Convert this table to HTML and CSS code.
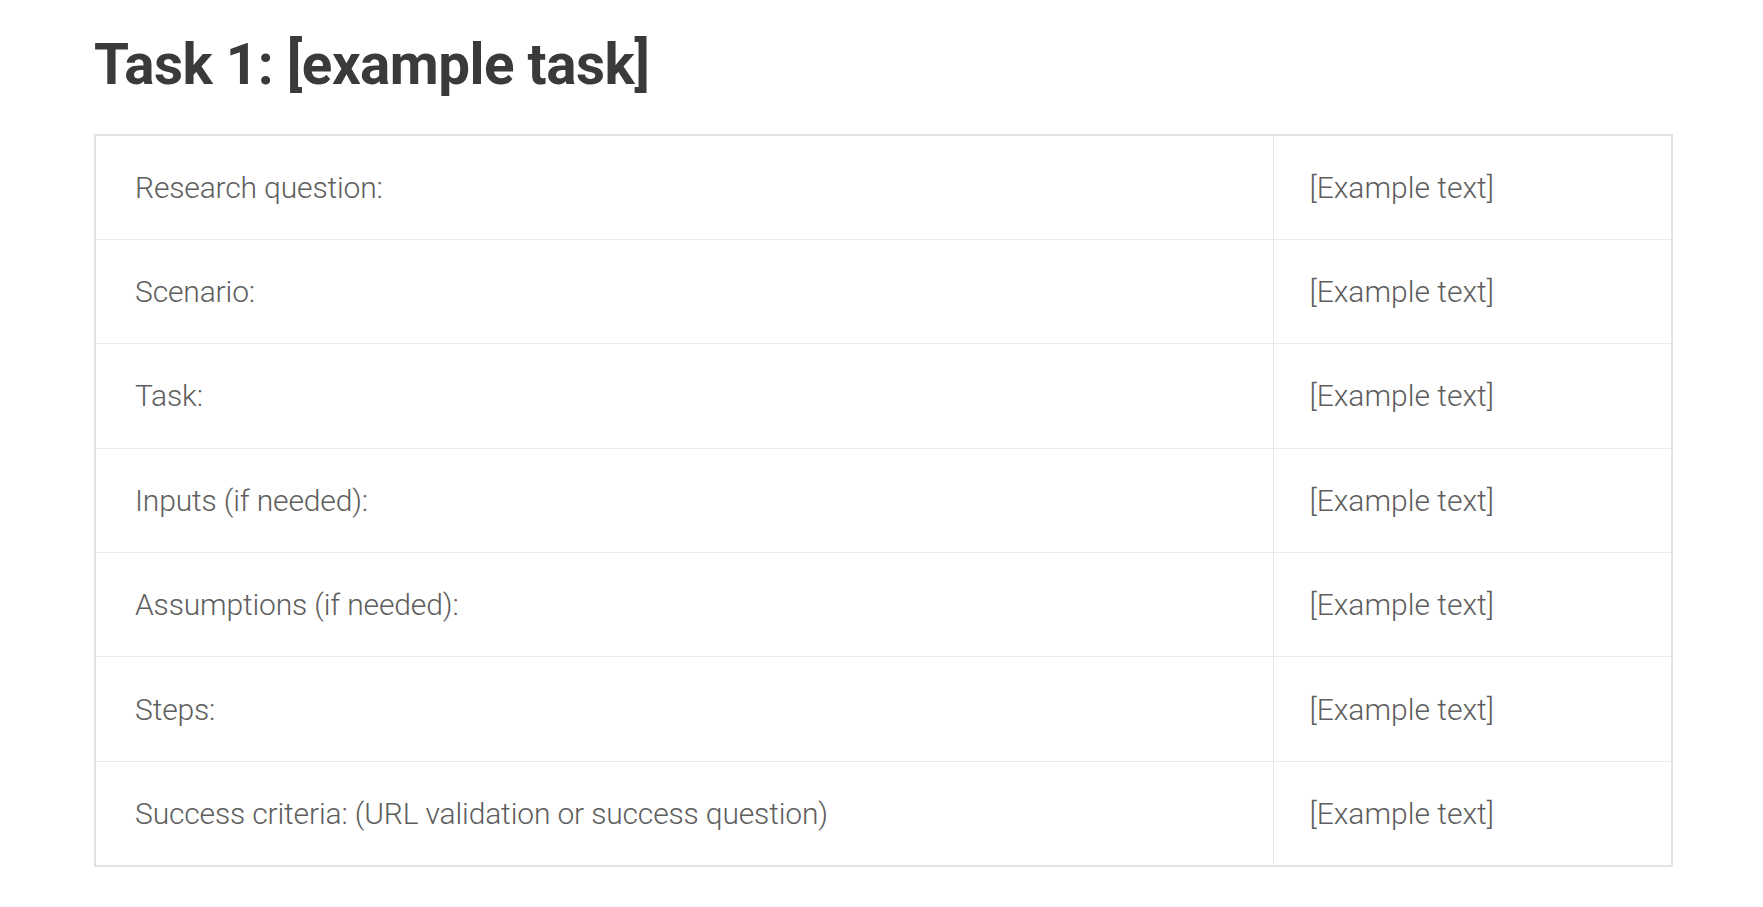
FILE: index.html
```html
<!DOCTYPE html>
<html>
<head>
<meta charset="utf-8">
<link rel="stylesheet" href="styles.css">
</head>
<body>
<div class="page">
  <h1 class="title">Task 1: [example task]</h1>
  <table class="task-table">
    <tr><td class="label">Research question:</td><td class="value">[Example text]</td></tr>
    <tr><td class="label">Scenario:</td><td class="value">[Example text]</td></tr>
    <tr><td class="label">Task:</td><td class="value">[Example text]</td></tr>
    <tr><td class="label">Inputs (if needed):</td><td class="value">[Example text]</td></tr>
    <tr><td class="label">Assumptions (if needed):</td><td class="value">[Example text]</td></tr>
    <tr><td class="label">Steps:</td><td class="value">[Example text]</td></tr>
    <tr><td class="label">Success criteria: (URL validation or success question)</td><td class="value">[Example text]</td></tr>
  </table>
</div>
</body>
</html>
```

FILE: styles.css
```css
html, body {
  margin: 0;
  padding: 0;
  background: #ffffff;
}
.page {
  padding: 32px 0 0 94px;
  font-family: Roboto, "Liberation Sans", sans-serif;
}
.title {
  margin: 0 0 36px 0;
  font-size: 56.5px;
  font-weight: 700;
  line-height: normal;
  color: #3a3a3a;
  letter-spacing: -0.5px;
}
.task-table {
  border-collapse: collapse;
  width: 1579px;
  border: 2px solid #e2e2e2;
}
.task-table td {
  height: 104.4px;
  padding: 0;
  border-top: 1px solid #ebebeb;
  font-size: 30px;
  font-weight: 300;
  color: #5e5e5e;
  vertical-align: middle;
  box-sizing: border-box;
}
.task-table td.label {
  width: 1178px;
  padding-left: 39px;
  border-right: 1px solid #e6e6e6;
  letter-spacing: -0.15px;
}
.task-table td.value {
  padding-left: 36px;
}
```
